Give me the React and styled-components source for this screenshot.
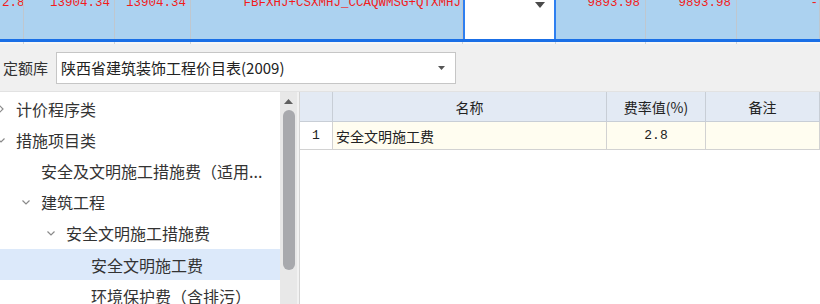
import React from "react";
import styled, { createGlobalStyle } from "styled-components";

const GlobalStyle = createGlobalStyle`
  html, body {
    margin: 0;
    padding: 0;
    background: #ffffff;
  }
  body {
    font-family: "Noto Sans CJK SC", "Noto Sans", sans-serif;
  }
`;

const Screen = styled.div`
  width: 820px;
  height: 304px;
  overflow: hidden;
  display: flex;
  flex-direction: column;
  background: #f0f0f0;
`;

const GridTop = styled.div`
  height: 44px;
  flex: none;
  display: flex;
  flex-direction: column;
  overflow: hidden;
`;

const SelectedRow = styled.div`
  height: 39px;
  flex: none;
  display: flex;
  background: #acd2f0;
  border-bottom: 3px solid #1a6fe6;
  overflow: hidden;
`;

const NextRowStrip = styled.div`
  flex: 1;
  display: flex;
  background: #f6f6f6;
`;

const TopCell = styled.div`
  width: ${(p) => p.w}px;
  flex: none;
  box-sizing: border-box;
  border-right: 1px solid #bfc7cf;
  padding: 0 ${(p) => p.pad ?? 4}px;
  margin-top: -4px;
  font-family: "Liberation Mono", monospace;
  font-size: 12.5px;
  line-height: 14px;
  color: #f21c1c;
  text-align: right;
  white-space: nowrap;
  overflow: hidden;
`;

const EditCell = styled.div`
  width: 93px;
  flex: none;
  box-sizing: border-box;
  background: #ffffff;
  border-left: 2px solid #2e7ff0;
  border-right: 2px solid #2e7ff0;
  display: flex;
  justify-content: flex-end;
  align-items: flex-start;
  padding: 2px 9px 0 0;
`;

const StripCell = styled.div`
  width: ${(p) => p.w}px;
  flex: none;
  box-sizing: border-box;
  border-right: 1px solid #cfd4d9;
`;

const Toolbar = styled.div`
  height: 48px;
  flex: none;
  display: flex;
  align-items: center;
  gap: 8px;
  padding-left: 3px;
  border-bottom: 1px solid #e2e2e2;
  box-sizing: border-box;
`;

const Label = styled.span`
  font-size: 15px;
  color: #333;
`;

const Select = styled.div`
  width: 400px;
  height: 32px;
  box-sizing: border-box;
  border: 1px solid #c6c6c6;
  background: #ffffff;
  display: flex;
  align-items: center;
  justify-content: space-between;
  padding: 0 10px 0 4px;
  font-size: 15px;
  color: #222;
`;

const Main = styled.div`
  flex: 1;
  display: flex;
  background: #ffffff;
  min-height: 0;
`;

const TreePanel = styled.div`
  width: 280px;
  flex: none;
  overflow: hidden;
  padding-top: 1px;
`;

const TreeRow = styled.div`
  height: 31.2px;
  display: flex;
  align-items: center;
  margin-left: -14px;
  padding-left: ${(p) => p.level * 25}px;
  background: ${(p) => (p.active ? "#dce9fa" : "transparent")};
  font-size: 16px;
  color: #333;
  white-space: nowrap;
`;

const Toggle = styled.span`
  width: 30px;
  flex: none;
  display: flex;
  justify-content: center;
  align-items: center;
`;

const ScrollTrack = styled.div`
  width: 17px;
  flex: none;
  background: #e8e8e8;
  display: flex;
  flex-direction: column;
  align-items: center;
  padding-top: 7px;
  gap: 6px;
  border-right: 2px solid #f2f2f2;
`;

const ScrollThumb = styled.div`
  width: 12px;
  height: 160px;
  border-radius: 6px;
  background: #a8a9ad;
`;

const Table = styled.div`
  flex: 1;
  display: flex;
  flex-direction: column;
  border-left: 1px solid #d4d4d4;
`;

const TableRow = styled.div`
  display: flex;
  height: ${(p) => p.h}px;
  box-sizing: border-box;
  border-bottom: 1px solid ${(p) => (p.head ? "#c8ced6" : "#d2d2d2")};
  background: ${(p) => (p.head ? "#e3eaf4" : "#fffdf0")};
`;

const Cell = styled.div`
  width: ${(p) => (p.w ? `${p.w}px` : "auto")};
  flex: ${(p) => (p.w ? "none" : "1")};
  box-sizing: border-box;
  border-right: 1px solid ${(p) => (p.head ? "#c8ced6" : "#d2d2d2")};
  display: flex;
  align-items: center;
  justify-content: ${(p) => p.align || "center"};
  padding: 0 3px;
  font-size: 14px;
  color: #222;
  background: ${(p) => (p.plain ? "#ffffff" : "transparent")};
`;

const NumText = styled.span`
  font-family: "Liberation Mono", monospace;
  font-size: 13px;
`;

const Chevron = ({ open }) => (
  <svg width="10" height="10" viewBox="0 0 10 10">
    <path
      d={open ? "M1.5 3.5 L5 7 L8.5 3.5" : "M3.5 1.5 L7 5 L3.5 8.5"}
      fill="none"
      stroke="#8a8a8a"
      strokeWidth="1.2"
    />
  </svg>
);

const Caret = ({ color = "#555", w = 9, h = 5, up = false }) => (
  <svg width={w} height={h} viewBox={`0 0 ${w} ${h}`}>
    <path
      d={up ? `M0 ${h} L${w} ${h} L${w / 2} 0 Z` : `M0 0 L${w} 0 L${w / 2} ${h} Z`}
      fill={color}
    />
  </svg>
);

const tree = [
  { text: "计价程序类", level: 0, toggle: "closed" },
  { text: "措施项目类", level: 0, toggle: "open" },
  { text: "安全及文明施工措施费（适用...", level: 1 },
  { text: "建筑工程", level: 1, toggle: "open" },
  { text: "安全文明施工措施费", level: 2, toggle: "open" },
  { text: "安全文明施工费", level: 3, active: true },
  { text: "环境保护费（含排污）", level: 3 },
];

export default function App() {
  return (
    <>
      <GlobalStyle />
      <Screen>
        <GridTop>
          <SelectedRow>
            <TopCell w={24} pad={2}>2.8</TopCell>
            <TopCell w={91}>13904.34</TopCell>
            <TopCell w={76}>13904.34</TopCell>
            <TopCell w={272} pad={1}>FBFXHJ+CSXMHJ_CCAQWMSG+QTXMHJ</TopCell>
            <EditCell>
              <Caret w={10} h={6} color="#4a4a4a" />
            </EditCell>
            <TopCell w={90} pad={5}>9893.98</TopCell>
            <TopCell w={91} pad={5}>9893.98</TopCell>
            <TopCell w={83} pad={1}>-</TopCell>
          </SelectedRow>
          <NextRowStrip>
            <StripCell w={24} />
            <StripCell w={91} />
            <StripCell w={76} />
            <StripCell w={272} />
            <StripCell w={93} />
            <StripCell w={90} />
            <StripCell w={91} />
          </NextRowStrip>
        </GridTop>

        <Toolbar>
          <Label>定额库</Label>
          <Select>
            <span>陕西省建筑装饰工程价目表(2009)</span>
            <Caret w={7} h={4} color="#555" />
          </Select>
        </Toolbar>

        <Main>
          <TreePanel>
            {tree.map((item) => (
              <TreeRow key={item.text} level={item.level} active={item.active}>
                <Toggle>
                  {item.toggle && <Chevron open={item.toggle === "open"} />}
                </Toggle>
                {item.text}
              </TreeRow>
            ))}
          </TreePanel>
          <ScrollTrack>
            <Caret w={9} h={5} up color="#606060" />
            <ScrollThumb />
          </ScrollTrack>
          <Table>
            <TableRow head h={30}>
              <Cell head w={33} />
              <Cell head w={274}>名称</Cell>
              <Cell head w={99}>费率值(%)</Cell>
              <Cell head>备注</Cell>
            </TableRow>
            <TableRow h={28}>
              <Cell w={33} plain>
                <NumText>1</NumText>
              </Cell>
              <Cell w={274} align="flex-start">安全文明施工费</Cell>
              <Cell w={99}>
                <NumText>2.8</NumText>
              </Cell>
              <Cell />
            </TableRow>
          </Table>
        </Main>
      </Screen>
    </>
  );
}
